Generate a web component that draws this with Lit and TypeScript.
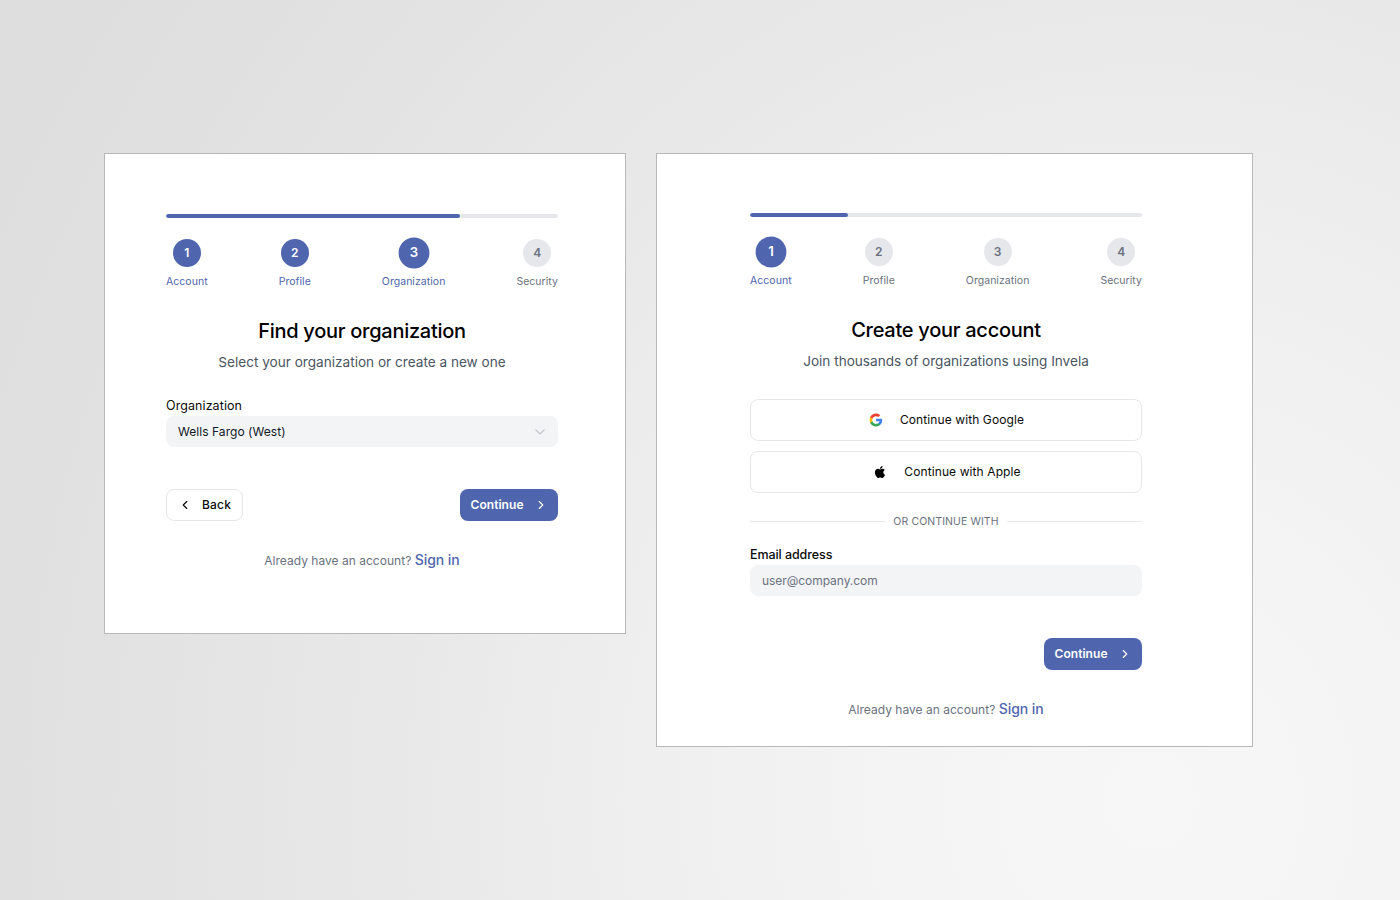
import { LitElement, html, css, svg } from "lit";
import { customElement } from "lit/decorators.js";

const chevron = (d: string) => html`<svg class="chev" viewBox="0 0 24 24" fill="none" stroke="currentColor" stroke-width="2" stroke-linecap="round" stroke-linejoin="round"><path d=${d}></path></svg>`;
const RIGHT = "m9 18 6-6-6-6";
const LEFT = "m15 18-6-6 6-6";
const DOWN = "m6 9 6 6 6-6";

const google = svg`<path fill="#4285F4" d="M22.56 12.25c0-.78-.07-1.53-.2-2.25H12v4.26h5.92c-.26 1.37-1.04 2.53-2.21 3.31v2.77h3.57c2.08-1.92 3.28-4.74 3.28-8.09z"/><path fill="#34A853" d="M12 23c2.97 0 5.46-.98 7.28-2.66l-3.57-2.77c-.98.66-2.23 1.06-3.71 1.06-2.86 0-5.29-1.93-6.16-4.53H2.18v2.84C3.99 20.53 7.7 23 12 23z"/><path fill="#FBBC05" d="M5.84 14.09c-.22-.66-.35-1.36-.35-2.09s.13-1.43.35-2.09V7.07H2.18C1.43 8.55 1 10.22 1 12s.43 3.45 1.18 4.93l2.85-2.22.81-.62z"/><path fill="#EA4335" d="M12 5.38c1.62 0 3.06.56 4.21 1.64l3.15-3.15C17.45 2.09 14.97 1 12 1 7.7 1 3.99 3.47 2.18 7.07l3.66 2.84c.87-2.6 3.3-4.53 6.16-4.53z"/>`;
const apple = svg`<path fill="#000" d="M17.05 20.28c-.98.95-2.05.8-3.08.35-1.09-.46-2.09-.48-3.24 0-1.44.62-2.2.44-3.06-.35C2.79 15.25 3.51 7.59 9.05 7.31c1.35.07 2.29.74 3.08.8 1.18-.24 2.31-.93 3.57-.84 1.51.12 2.65.72 3.4 1.8-3.12 1.87-2.38 5.98.48 7.13-.57 1.5-1.31 2.99-2.54 4.09zM12.03 7.25c-.15-2.23 1.66-4.07 3.74-4.25.29 2.58-2.34 4.5-3.74 4.25z"/>`;

@customElement("app-root")
export class AppRoot extends LitElement {
  static styles = css`
    :host {
      display: block;
      width: 1400px;
      height: 900px;
      overflow: hidden;
      font-family: Inter, "Liberation Sans", sans-serif;
      background: radial-gradient(ellipse 1400px 1530px at 1150px 800px,
        #f7f7f7 0%, #f4f4f4 18%, #eeeeee 39%, #e9e9e9 52%, #e0e0e0 82%, #dddddd 100%);
      color: #0a0a0a;
    }
    .page {
      display: flex;
      align-items: flex-start;
      gap: 30px;
      padding: 153px 0 0 104px;
    }
    .card {
      box-sizing: border-box;
      background: #fff;
      border: 1px solid #b8b8b8;
    }
    .c1 { width: 522px; height: 481px; padding: 60px 67px 0 61px; }
    .c2 { width: 597px; height: 594px; padding: 59px 110px 0 93px; }
    .bar { height: 4px; border-radius: 2px; background: #e5e7eb; overflow: hidden; }
    .fill { height: 100%; border-radius: 2px; background: #4f66af; }
    .steps { display: flex; justify-content: space-between; margin-top: 21px; }
    .step { display: flex; flex-direction: column; align-items: center; }
    .dot {
      width: 28px; height: 28px; border-radius: 50%;
      display: flex; align-items: center; justify-content: center;
      background: #e5e7eb; color: #6b7280;
      font-size: 12px; line-height: 14px; font-weight: 600; padding-bottom: 1px; box-sizing: border-box;
    }
    .step.done .dot { background: #4f66af; color: #fff; }
    .step.cur .dot { transform: scale(1.1); }
    .lbl { margin-top: 8px; font-size: 10.5px; line-height: 13px; color: #6b7280; letter-spacing: 0.04px; }
    .step.done .lbl { color: #4f66af; }
    h1 { margin: 29px 0 0; text-align: center; font-size: 20px; line-height: 28px; font-weight: 500; letter-spacing: -0.27px; color: #000; }
    .sub { margin: 7px 0 0; text-align: center; font-size: 13.6px; line-height: 20px; color: #4b5563; }
    .label { font-size: 12.5px; line-height: 16px; font-weight: 500; letter-spacing: -0.08px; color: #0a0a0a; }
    .c1 .label { margin-top: 26px; font-weight: 400; letter-spacing: 0.08px; }
    .input {
      box-sizing: border-box; height: 31px; margin-top: 2px;
      display: flex; align-items: center; justify-content: space-between;
      padding: 0 10px 0 12px; background: #f3f4f6; border-radius: 8px;
      font-size: 12px; letter-spacing: 0.05px; color: #111827;
    }
    .input.ph { color: #6b7280; letter-spacing: -0.05px; }
    .input .chev { width: 16px; height: 16px; color: #c4c7cc; }
    .actions { display: flex; justify-content: space-between; margin-top: 42px; }
    .c2 .actions { justify-content: flex-end; }
    .btn {
      box-sizing: border-box; height: 32px; display: flex; align-items: center;
      border-radius: 8px; font-size: 12px; letter-spacing: 0.05px; font-weight: 500; padding-bottom: 1px;
    }
    .chev { width: 14px; height: 14px; display: block; flex: none; }
    .back { width: 77px; padding-left: 11px; gap: 10px; background: #fff; border: 1px solid #e5e7eb; color: #0a0a0a; letter-spacing: 0.2px; }
    .next { width: 98px; padding-left: 10.5px; gap: 10.5px; background: #4f66af; color: #fff; font-weight: 600; }
    .foot { margin-top: 29px; text-align: center; font-size: 12px; line-height: 20px; color: #6b7280; letter-spacing: 0.02px; }
    .foot a { font-size: 14px; font-weight: 500; color: #4f66af; letter-spacing: -0.05px; }
    .social {
      box-sizing: border-box; height: 42px; display: flex; align-items: center; justify-content: center;
      gap: 17px; padding-bottom: 2px; background: #fff; border: 1px solid #e5e7eb; border-radius: 8px;
      font-size: 12px; letter-spacing: 0.1px; color: #0a0a0a;
    }
    .social svg { width: 14px; height: 14px; display: block; margin-top: 2px; }
    .social.g { margin-top: 28px; padding-left: 1px; }
    .social.a { margin-top: 10px; padding-left: 1px; gap: 16px; }
    .social.a svg { width: 16px; height: 16px; margin-top: 1px; }
    .or { display: flex; align-items: center; gap: 8px; margin-top: 22px; font-size: 10.5px; line-height: 14px; color: #6b7280; letter-spacing: 0.1px; }
    .or i { flex: 1; height: 1px; margin-bottom: 2px; background: #e5e7eb; }
    .c2 .label { margin-top: 18px; }
  `;

  private stepper(current: number) {
    const names = ["Account", "Profile", "Organization", "Security"];
    return html`
      <div class="bar"><div class="fill" style="width:${(current / 4) * 100}%"></div></div>
      <div class="steps">
        ${names.map((n, i) => html`
          <div class="step ${i < current ? "done" : ""} ${i === current - 1 ? "cur" : ""}">
            <div class="dot">${i + 1}</div>
            <div class="lbl">${n}</div>
          </div>`)}
      </div>`;
  }

  private next() {
    return html`<div class="btn next">Continue${chevron(RIGHT)}</div>`;
  }

  private foot() {
    return html`<div class="foot">Already have an account? <a>Sign in</a></div>`;
  }

  render() {
    return html`
      <div class="page">
        <section class="card c1">
          ${this.stepper(3)}
          <h1>Find your organization</h1>
          <p class="sub">Select your organization or create a new one</p>
          <div class="label">Organization</div>
          <div class="input"><span>Wells Fargo (West)</span>${chevron(DOWN)}</div>
          <div class="actions">
            <div class="btn back">${chevron(LEFT)}Back</div>
            ${this.next()}
          </div>
          ${this.foot()}
        </section>
        <section class="card c2">
          ${this.stepper(1)}
          <h1>Create your account</h1>
          <p class="sub">Join thousands of organizations using Invela</p>
          <div class="social g"><svg viewBox="0 0 24 24">${google}</svg>Continue with Google</div>
          <div class="social a"><svg viewBox="0 0 24 24">${apple}</svg>Continue with Apple</div>
          <div class="or"><i></i>OR CONTINUE WITH<i></i></div>
          <div class="label">Email address</div>
          <div class="input ph">user@company.com</div>
          <div class="actions">${this.next()}</div>
          ${this.foot()}
        </section>
      </div>`;
  }
}
